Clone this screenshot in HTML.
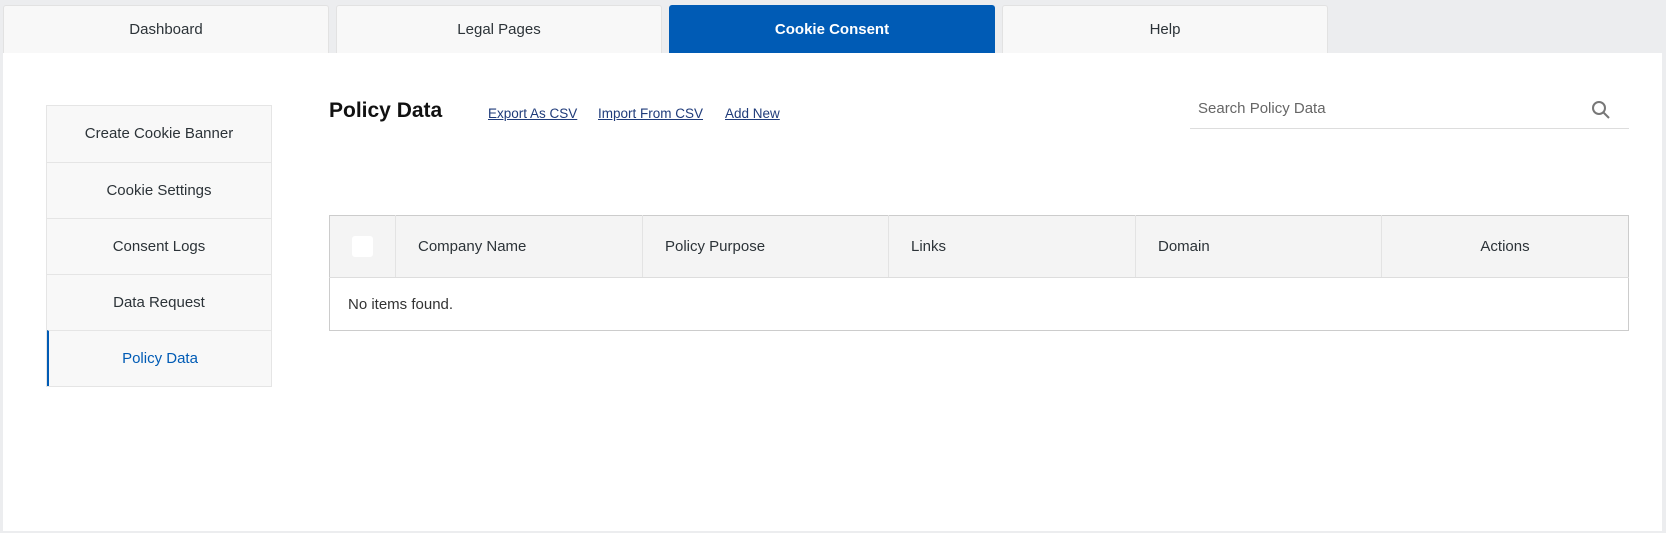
<!DOCTYPE html>
<html><head><style>
*{box-sizing:border-box;margin:0;padding:0}
body{width:1666px;height:533px;background:#ecedef;font-family:"Liberation Sans",Arial,sans-serif;position:relative;overflow:hidden;color:#333}
.tab{position:absolute;top:5px;height:48px;width:326px;background:#f8f8f8;border:1px solid #e2e2e2;border-bottom:none;border-radius:3px 3px 0 0;text-align:center;line-height:48px;font-size:15px;color:#2c3338}
.tab.act{background:#005bb5;color:#fff;font-weight:bold;border-color:#005bb5}
.panel{position:absolute;left:3px;top:53px;width:1659px;height:478px;background:#fff}
.side{position:absolute;left:46px;top:105px;width:226px;border:1px solid #e5e5e5}
.side div{height:56px;line-height:56px;text-align:center;background:#f8f8f8;border-top:1px solid #e5e5e5;font-size:15px;color:#2c3338}
.side div:first-child{border-top:none}
.side div.on{color:#005bb5;border-left:2px solid #005bb5}
.title{position:absolute;left:329px;top:99px;font-size:21px;font-weight:bold;color:#111}
.lnk{position:absolute;top:106px;font-size:13.5px;color:#1f3b7a;text-decoration:underline}
.search{position:absolute;left:1190px;top:94px;width:439px;height:35px;border-bottom:1px solid #ddd;font-size:15px;color:#666;padding-left:8px;line-height:30px}
table{position:absolute;left:329px;top:215px;width:1300px;border-collapse:collapse;border:1px solid #ccc;font-size:15px}
th{background:#f4f4f4;height:62px;text-align:left;font-weight:normal;color:#2c3338;border-left:1px solid #e3e3e3;padding-left:22px;border-bottom:1px solid #ddd}
td{height:53px;padding-left:18px;color:#333}
.cb{width:21px;height:21px;background:#fff;border-radius:3px;display:inline-block;vertical-align:middle}
</style></head><body>
<div class="tab" style="left:3px">Dashboard</div>
<div class="tab" style="left:336px">Legal Pages</div>
<div class="tab act" style="left:669px">Cookie Consent</div>
<div class="tab" style="left:1002px">Help</div>
<div class="panel"></div>
<div class="side">
<div>Create Cookie Banner</div><div>Cookie Settings</div><div>Consent Logs</div><div>Data Request</div><div class="on">Policy Data</div>
</div>
<div class="title">Policy Data</div>
<div class="lnk" style="left:488px">Export As CSV</div>
<div class="lnk" style="left:598px">Import From CSV</div>
<div class="lnk" style="left:725px">Add New</div>
<div class="search">Search Policy Data
<svg style="position:absolute;right:18px;top:6px" width="20" height="20" viewBox="0 0 20 20"><circle cx="8" cy="8" r="6" fill="none" stroke="#777" stroke-width="2"/><path d="M12.5 12.5L18 18" stroke="#777" stroke-width="2"/></svg></div>
<table>
<tr><th style="width:66px;border-left:none;padding-left:22px"><span class="cb"></span></th><th style="width:247px">Company Name</th><th style="width:246px">Policy Purpose</th><th style="width:247px">Links</th><th style="width:246px">Domain</th><th style="text-align:center;padding-left:0">Actions</th></tr>
<tr><td colspan="6">No items found.</td></tr>
</table>
</body></html>
